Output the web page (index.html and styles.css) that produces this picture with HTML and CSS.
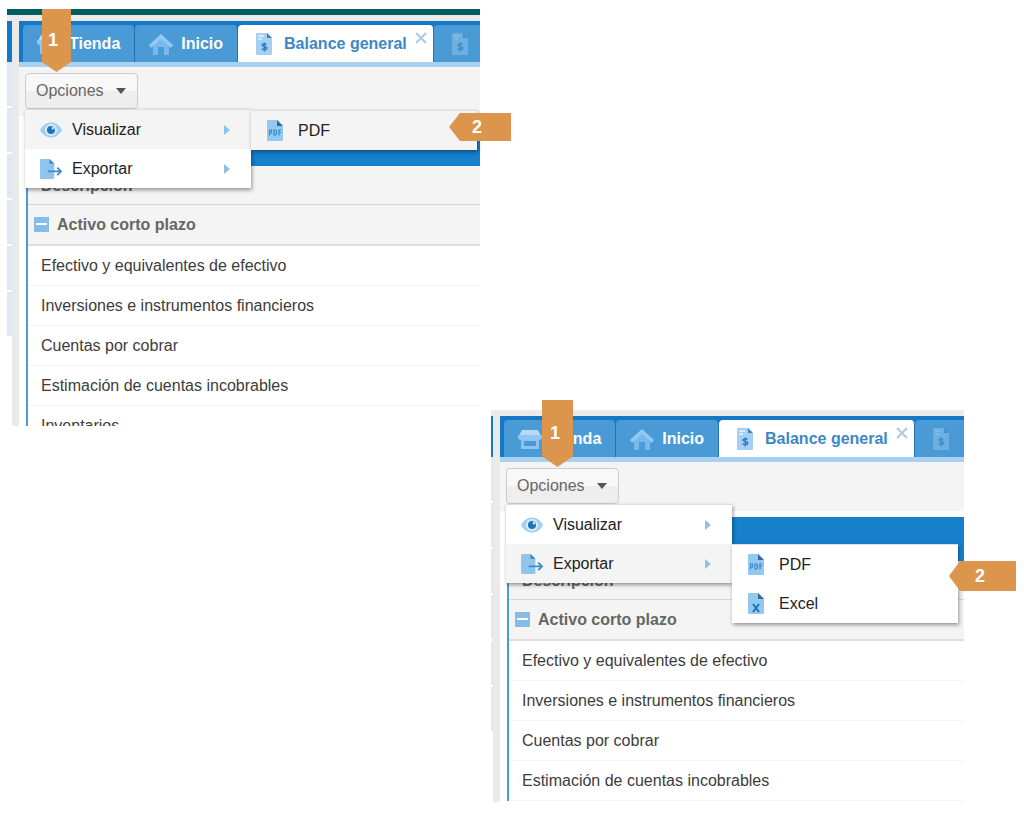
FILE: index.html
```
<!DOCTYPE html>
<html lang="es">
<head>
    <meta charset="UTF-8">
    <meta name="viewport" content="width=device-width, initial-scale=1.0">
    <title>Balance general</title>
    <link rel="stylesheet" href="styles.css">
</head>
<body>
    <!-- Shared icons -->
    <svg class="sprite" aria-hidden="true">
        <symbol id="icon-store" viewBox="0 0 24 24">
            <path d="M4 3h16l3 6H1z" fill="#b4dbfa"/>
            <path d="M0 8h24v2c0 2-1 3-3 3H3c-2 0-3-1-3-3z" fill="#92c6f1"/>
            <path d="M3 13h18v9H3zM6 14v5h12v-5z" fill="#8ec3ef" fill-rule="evenodd"/>
        </symbol>
        <symbol id="icon-home" viewBox="0 0 24 24">
            <path d="M4 12l8-7 8 7v11h-5v-8H9v8H4z" fill="#78b8ea"/>
            <path d="M12 2l12 11-2 3L12 7 2 16l-2-3z" fill="#92c9f4"/>
        </symbol>
        <symbol id="icon-balance" viewBox="0 0 16 22">
            <path d="M1 0h10l5 5v16a1 1 0 0 1-1 1H1a1 1 0 0 1-1-1V1a1 1 0 0 1 1-1z" fill="#a5d0f2"/>
            <path d="M11 0l5 5h-5z" fill="#3c83bd"/>
            <path d="M2 3h6M2 6h4" stroke="#e6f3fd" stroke-width="1.5"/>
            <path d="M10.500 11.500c-1-1.200-4.500-1.200-4.500.6 0 2 4.800 1 4.800 3 0 2-3.800 2-5 .4M8.300 9.500v9" fill="none" stroke="#2f7fc1" stroke-width="1.500"/>
        </symbol>
        <symbol id="icon-eye" viewBox="0 0 22 16">
            <path d="M0 8C5-2 17-2 22 8 17 18 5 18 0 8z" fill="#a3cfef"/>
            <circle cx="11" cy="8" r="6" fill="#d9eefb"/>
            <circle cx="11" cy="8" r="4" fill="#1c75bc"/>
            <circle cx="13" cy="6" r="1.500" fill="#c5e3f8"/>
        </symbol>
        <symbol id="icon-export" viewBox="0 0 23 21">
            <path d="M1 0h9l5 5v15a1 1 0 0 1-1 1H1a1 1 0 0 1-1-1V1a1 1 0 0 1 1-1z" fill="#8fc5ed"/>
            <path d="M10 0l5 5h-5z" fill="#3c83bd"/>
            <path d="M8 13h13M18 9l4 4-4 4" fill="none" stroke="#3c8ccb" stroke-width="2"/>
        </symbol>
        <symbol id="icon-pdf" viewBox="0 0 16 21">
            <path d="M1 0h9l6 6v14a1 1 0 0 1-1 1H1a1 1 0 0 1-1-1V1a1 1 0 0 1 1-1z" fill="#93c9f1"/>
            <path d="M10 0l6 6h-6z" fill="#34699a"/>
            <path d="M2.500 15.500V10h2v3h-2M7 10v5h1.500l1-1v-3l-1-1zM12 15.500V10h2.500M12 12.500h2" fill="none" stroke="#3988c8" stroke-width="1.200"/>
        </symbol>
        <symbol id="icon-excel" viewBox="0 0 16 21">
            <path d="M1 0h9l6 6v14a1 1 0 0 1-1 1H1a1 1 0 0 1-1-1V1a1 1 0 0 1 1-1z" fill="#93c9f1"/>
            <path d="M10 0l6 6h-6z" fill="#34699a"/>
            <path d="M5 11l6 8M11 11l-6 8" fill="none" stroke="#1c75bc" stroke-width="2"/>
        </symbol>
    </svg>

    <main class="steps">
        <!-- Visualizar -->
        <section class="step">
            <div class="topbar"></div>
            <div class="window">
                <div class="rail">
                    <div class="rail-head"></div>
                    <div class="rail-item"></div>
                    <div class="rail-item"></div>
                    <div class="rail-item"></div>
                    <div class="rail-item"></div>
                    <div class="rail-item"></div>
                    <div class="rail-item"></div>
                </div>
                <div class="content">
                    <nav class="tabs">
                        <button class="tab"><svg class="tab-icon"><use href="#icon-store"/></svg>Tienda</button>
                        <button class="tab"><svg class="tab-icon"><use href="#icon-home"/></svg>Inicio</button>
                        <button class="tab active"><svg class="doc-icon"><use href="#icon-balance"/></svg>Balance general<svg class="close" viewBox="0 0 12 12"><path d="M1 1l10 10M11 1L1 11"/></svg></button>
                        <button class="tab faded" aria-label="Balance"><svg class="doc-icon"><use href="#icon-balance"/></svg></button>
                    </nav>
                    <div class="toolbar">
                        <button class="options">Opciones <span class="caret"></span></button>
                        <ul class="menu">
                            <li class="item selected">
                                <button><svg class="menu-icon"><use href="#icon-eye"/></svg>Visualizar<span class="arrow"></span></button>
                                <ul class="submenu">
                                    <li class="item selected"><button><svg class="file-icon"><use href="#icon-pdf"/></svg>PDF</button></li>
                                </ul>
                                <span class="marker marker-left">2</span>
                            </li>
                            <li class="item">
                                <button><svg class="menu-icon"><use href="#icon-export"/></svg>Exportar<span class="arrow"></span></button>
                            </li>
                        </ul>
                    </div>
                    <div class="report cropped">
                        <div class="report-title"></div>
                        <table>
                            <thead>
                                <tr><th>Descripción</th></tr>
                            </thead>
                            <tbody>
                                <tr class="group"><th><button class="toggle" aria-label="Contraer"></button>Activo corto plazo</th></tr>
                                <tr><td>Efectivo y equivalentes de efectivo</td></tr>
                                <tr><td>Inversiones e instrumentos financieros</td></tr>
                                <tr><td>Cuentas por cobrar</td></tr>
                                <tr><td>Estimación de cuentas incobrables</td></tr>
                                <tr><td>Inventarios</td></tr>
                            </tbody>
                        </table>
                    </div>
                </div>
            </div>
            <span class="marker marker-down">1</span>
        </section>

        <!-- Exportar -->
        <section class="step step-export">
            <div class="window">
                <div class="rail">
                    <div class="rail-head"></div>
                    <div class="rail-item"></div>
                    <div class="rail-item"></div>
                    <div class="rail-item"></div>
                    <div class="rail-item"></div>
                    <div class="rail-item"></div>
                    <div class="rail-item"></div>
                </div>
                <div class="content">
                    <nav class="tabs">
                        <button class="tab"><svg class="tab-icon"><use href="#icon-store"/></svg>Tienda</button>
                        <button class="tab"><svg class="tab-icon"><use href="#icon-home"/></svg>Inicio</button>
                        <button class="tab active"><svg class="doc-icon"><use href="#icon-balance"/></svg>Balance general<svg class="close" viewBox="0 0 12 12"><path d="M1 1l10 10M11 1L1 11"/></svg></button>
                        <button class="tab faded" aria-label="Balance"><svg class="doc-icon"><use href="#icon-balance"/></svg></button>
                    </nav>
                    <div class="toolbar">
                        <button class="options">Opciones <span class="caret"></span></button>
                        <ul class="menu">
                            <li class="item">
                                <button><svg class="menu-icon"><use href="#icon-eye"/></svg>Visualizar<span class="arrow"></span></button>
                            </li>
                            <li class="item selected">
                                <button><svg class="menu-icon"><use href="#icon-export"/></svg>Exportar<span class="arrow"></span></button>
                                <ul class="submenu">
                                    <li class="item"><button><svg class="file-icon"><use href="#icon-pdf"/></svg>PDF</button></li>
                                    <li class="item"><button><svg class="file-icon"><use href="#icon-excel"/></svg>Excel</button></li>
                                </ul>
                                <span class="marker marker-left">2</span>
                            </li>
                        </ul>
                    </div>
                    <div class="report">
                        <div class="report-title"></div>
                        <table>
                            <thead>
                                <tr><th>Descripción</th></tr>
                            </thead>
                            <tbody>
                                <tr class="group"><th><button class="toggle" aria-label="Contraer"></button>Activo corto plazo</th></tr>
                                <tr><td>Efectivo y equivalentes de efectivo</td></tr>
                                <tr><td>Inversiones e instrumentos financieros</td></tr>
                                <tr><td>Cuentas por cobrar</td></tr>
                                <tr><td>Estimación de cuentas incobrables</td></tr>
                            </tbody>
                        </table>
                    </div>
                </div>
            </div>
            <span class="marker marker-down">1</span>
        </section>
    </main>
</body>
</html>
```
FILE: styles.css
```
* {
    box-sizing: border-box;
}
body {
    margin: 0;
    background: #fff;
    font-family: "Liberation Sans", Arial, sans-serif;
    font-size: 16px;
    color: #3c3c3c;
}
button {
    margin: 0;
    border: none;
    background: none;
    font: inherit;
    color: inherit;
    cursor: pointer;
}
ul {
    margin: 0;
    padding: 0;
    list-style: none;
}
svg {
    flex-shrink: 0;
}
.sprite {
    position: absolute;
    width: 0;
    height: 0;
}
.steps {
    display: grid;
    grid-template-columns: 1fr 1fr;
    column-gap: 11px;
    align-items: start;
    padding: 9px 60px 20px 7px;
}
.step {
    position: relative;
    min-width: 0;
}
.step-export {
    margin-top: 401px;
}
.topbar {
    height: 6px;
    background: #005c5f;
}
.window {
    display: flex;
    padding-top: 6px;
    background: linear-gradient(#eaeaea, #eaeaea) top / 100% 6px no-repeat;
}

/* Left edge */
.rail {
    width: 12px;
    flex-shrink: 0;
    background: #fff;
    border-right: 7px solid #eaeaea;
}
.rail-head {
    height: 41px;
    background: #1478c6;
}
.rail-item {
    height: 46px;
    background: #dfe9f5;
    border-bottom: 2px solid #fff;
}
.step-export .rail {
    width: 9px;
}
.step-export .rail-item {
    background: #e6eaed;
}

/* Tabs */
.content {
    flex: 1;
    min-width: 0;
}
.tabs {
    display: flex;
    overflow: hidden;
    padding: 4px 0 0 4px;
    background: #1478c6;
    border-bottom: 5px solid #aad0ef;
}
.tab {
    display: flex;
    align-items: center;
    flex-shrink: 0;
    gap: 8px;
    height: 37px;
    padding: 0 14px;
    border-right: 1px solid #236fb0;
    border-radius: 4px 4px 0 0;
    background: #4a9ad6;
    color: #fff;
    font-weight: bold;
}
.tab-icon {
    width: 24px;
    height: 24px;
}
.doc-icon {
    width: 16px;
    height: 22px;
}
.tab.active {
    gap: 12px;
    padding: 0 6px 0 18px;
    background: #fff;
    color: #3c88c6;
}
.tab.faded {
    width: 60px;
    padding: 0 18px;
}
.faded .doc-icon {
    opacity: 0.4;
}
.close {
    width: 12px;
    height: 12px;
    margin: 0 0 12px -4px;
    fill: none;
    stroke: #a9cbe3;
    stroke-width: 2;
}

/* Options menu */
.toolbar {
    position: relative;
    height: 49px;
    padding: 6px;
    background: #f4f4f4;
}
.options {
    display: flex;
    align-items: center;
    gap: 12px;
    height: 36px;
    padding: 0 11px 0 10px;
    border: 1px solid #ccc;
    border-radius: 4px;
    background: linear-gradient(#f8f8f8 50%, #eee 50%);
    color: #666;
}
.caret {
    border: 5px solid transparent;
    border-top: 6px solid #555;
    border-bottom: 0;
}
.menu, .submenu {
    position: absolute;
    width: 226px;
    background: #fff;
    border-top: 1px solid #ddd;
    box-shadow: 1px 2px 4px rgba(0, 0, 0, 0.4);
    color: #222;
}
.menu {
    top: 42px;
    left: 6px;
    z-index: 1;
}
.item {
    position: relative;
}
.item.selected {
    background: #f4f4f4;
}
.item > button {
    display: flex;
    align-items: center;
    gap: 10px;
    width: 100%;
    height: 39px;
    padding: 0 21px 0 15px;
}
.menu-icon {
    width: 22px;
    height: 20px;
}
.file-icon {
    width: 16px;
    height: 21px;
    margin: 0 5px 0 1px;
}
.arrow {
    margin-left: auto;
    border: 5px solid transparent;
    border-left: 6px solid #8dc2e8;
    border-right: 0;
}
.submenu {
    top: 0;
    left: 100%;
}

/* Report */
.report {
    padding: 6px 0 1px 7px;
    background: #fff;
}
.report.cropped {
    max-height: 310px;
    padding-bottom: 0;
    overflow: hidden;
}
.report-title {
    height: 44px;
    background: #1780cc;
}
table {
    width: 100%;
    border-collapse: separate;
    border-spacing: 0;
    border-left: 2px solid #4a9ad6;
}
th, td {
    height: 40px;
    padding: 0 13px;
    border-bottom: 1px solid #f4f4f4;
    text-align: left;
}
th {
    height: 39px;
    padding-top: 2px;
    border-bottom: 1px solid #d8d8d8;
    background: #f4f4f4;
    color: #666;
}
.group th {
    height: 41px;
    padding: 0 6px;
    border-bottom: 2px solid #ddd;
}
.toggle {
    width: 15px;
    height: 15px;
    margin-right: 8px;
    padding: 0;
    background: linear-gradient(#fff, #fff) center / 11px 2px no-repeat #86bde8;
    vertical-align: -2px;
}

/* Numbered callouts */
.marker {
    position: absolute;
    display: flex;
    align-items: center;
    background: #dc954c;
    color: #fff;
    font-size: 18px;
    font-weight: bold;
    z-index: 2;
}
.marker-down {
    top: 0;
    left: 35px;
    width: 29px;
    height: 63px;
    padding-left: 6px;
    clip-path: polygon(0 0, 100% 0, 100% 84%, 50% 100%, 0 84%);
}
.step-export .marker-down {
    top: -10px;
    left: 51px;
    width: 31px;
    height: 67px;
    padding-left: 8px;
}
.marker-left {
    top: 3px;
    left: 424px;
    width: 62px;
    height: 28px;
    padding-left: 23px;
    clip-path: polygon(11px 0, 100% 0, 100% 100%, 11px 100%, 0 50%);
}
.step-export .marker-left {
    top: 17px;
    left: 443px;
    width: 67px;
    height: 30px;
    padding-left: 26px;
}
```
